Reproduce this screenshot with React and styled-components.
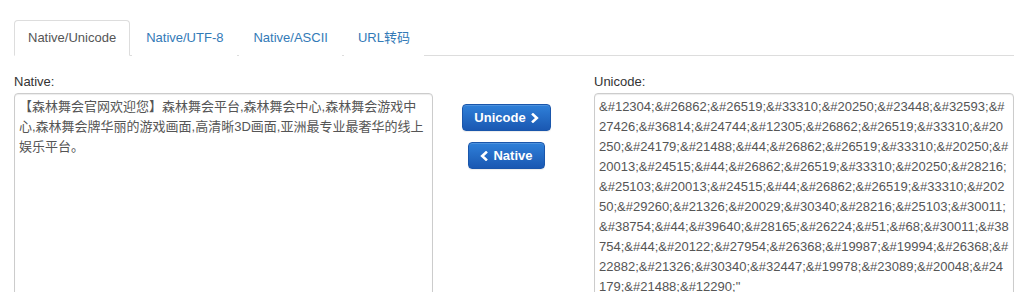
import React, { useState } from "react";
import styled, { createGlobalStyle } from "styled-components";

const NATIVE_TEXT =
  "【森林舞会官网欢迎您】森林舞会平台,森林舞会中心,森林舞会游戏中心,森林舞会牌华丽的游戏画面,高清晰3D画面,亚洲最专业最奢华的线上娱乐平台。";

const UNICODE_TEXT =
  "&#12304;&#26862;&#26519;&#33310;&#20250;&#23448;&#32593;&#27426;&#36814;&#24744;&#12305;&#26862;&#26519;&#33310;&#20250;&#24179;&#21488;&#44;&#26862;&#26519;&#33310;&#20250;&#20013;&#24515;&#44;&#26862;&#26519;&#33310;&#20250;&#28216;&#25103;&#20013;&#24515;&#44;&#26862;&#26519;&#33310;&#20250;&#29260;&#21326;&#20029;&#30340;&#28216;&#25103;&#30011;&#38754;&#44;&#39640;&#28165;&#26224;&#51;&#68;&#30011;&#38754;&#44;&#20122;&#27954;&#26368;&#19987;&#19994;&#26368;&#22882;&#21326;&#30340;&#32447;&#19978;&#23089;&#20048;&#24179;&#21488;&#12290;\"";

const tabs = ["Native/Unicode", "Native/UTF-8", "Native/ASCII", "URL转码"];

const Chevron = ({ dir }) => (
  <svg width="8" height="10" viewBox="0 0 8 10">
    <polyline
      points={dir === "right" ? "2,1.5 5.8,5 2,8.5" : "6,1.5 2.2,5 6,8.5"}
      fill="none"
      stroke="#fff"
      strokeWidth="2.6"
      strokeLinecap="square"
    />
  </svg>
);

export default function App() {
  const [active, setActive] = useState(0);

  return (
    <>
      <GlobalStyle />
      <Page>
        <TabNav>
          {tabs.map((t, i) => (
            <Tab key={t} $active={i === active} onClick={() => setActive(i)}>
              {t}
            </Tab>
          ))}
        </TabNav>

        <Converter>
          <Column>
            <Label>Native:</Label>
            <TextBox defaultValue={NATIVE_TEXT} />
          </Column>

          <Actions>
            <ActionButton>
              Unicode <Chevron dir="right" />
            </ActionButton>
            <ActionButton>
              <Chevron dir="left" /> Native
            </ActionButton>
          </Actions>

          <Column>
            <Label>Unicode:</Label>
            <TextBox defaultValue={UNICODE_TEXT} />
          </Column>
        </Converter>
      </Page>
    </>
  );
}

const GlobalStyle = createGlobalStyle`
  * {
    box-sizing: border-box;
  }
  body {
    margin: 0;
    background: #fff;
    font-family: "Liberation Sans", Arial, "Noto Sans CJK SC", sans-serif;
    font-size: 13px;
    line-height: 20px;
    color: #333;
  }
`;

const Page = styled.div`
  width: 1026px;
  padding: 20px 12px 0 14px;
`;

const TabNav = styled.div`
  display: flex;
  border-bottom: 1px solid #ddd;
`;

const Tab = styled.a`
  display: block;
  margin-right: 2px;
  margin-bottom: -1px;
  padding: 7px 13px;
  line-height: 20px;
  border: 1px solid ${(p) => (p.$active ? "#ddd" : "transparent")};
  border-bottom-color: transparent;
  border-radius: 4px 4px 0 0;
  background: #fff;
  color: ${(p) => (p.$active ? "#555" : "#337ab7")};
  cursor: pointer;
`;

const Converter = styled.div`
  display: grid;
  grid-template-columns: 419px 161px 420px;
  padding-top: 17px;
`;

const Column = styled.div`
  display: flex;
  flex-direction: column;
  min-width: 0;
`;

const Label = styled.label`
  line-height: 18px;
  margin-bottom: 2px;
  color: #333;
`;

const TextBox = styled.textarea`
  display: block;
  width: 100%;
  height: 230px;
  padding: 3px 4px;
  border: 1px solid #ccc;
  border-radius: 4px;
  box-shadow: inset 0 1px 1px rgba(0, 0, 0, 0.075);
  font-family: "Liberation Sans", Arial, "Noto Sans CJK SC", sans-serif;
  font-size: 13px;
  line-height: 20px;
  color: #555;
  resize: none;
  word-break: break-all;
  overflow: hidden;
  outline: none;
`;

const Actions = styled.div`
  display: flex;
  flex-direction: column;
  align-items: center;
  gap: 11px;
  padding: 31px 14px 0 0;
`;

const ActionButton = styled.button`
  display: inline-flex;
  align-items: center;
  gap: 5px;
  height: 27px;
  padding: 0 11px;
  border: 1px solid #1a56ab;
  border-radius: 4px;
  background: linear-gradient(to bottom, #2f80d9 0%, #1a58b2 100%);
  box-shadow: inset 0 1px 0 rgba(255, 255, 255, 0.15), 0 1px 1px rgba(0, 0, 0, 0.075);
  color: #fff;
  font-family: "Liberation Sans", Arial, sans-serif;
  font-size: 13px;
  font-weight: bold;
  line-height: 20px;
  cursor: pointer;
`;
